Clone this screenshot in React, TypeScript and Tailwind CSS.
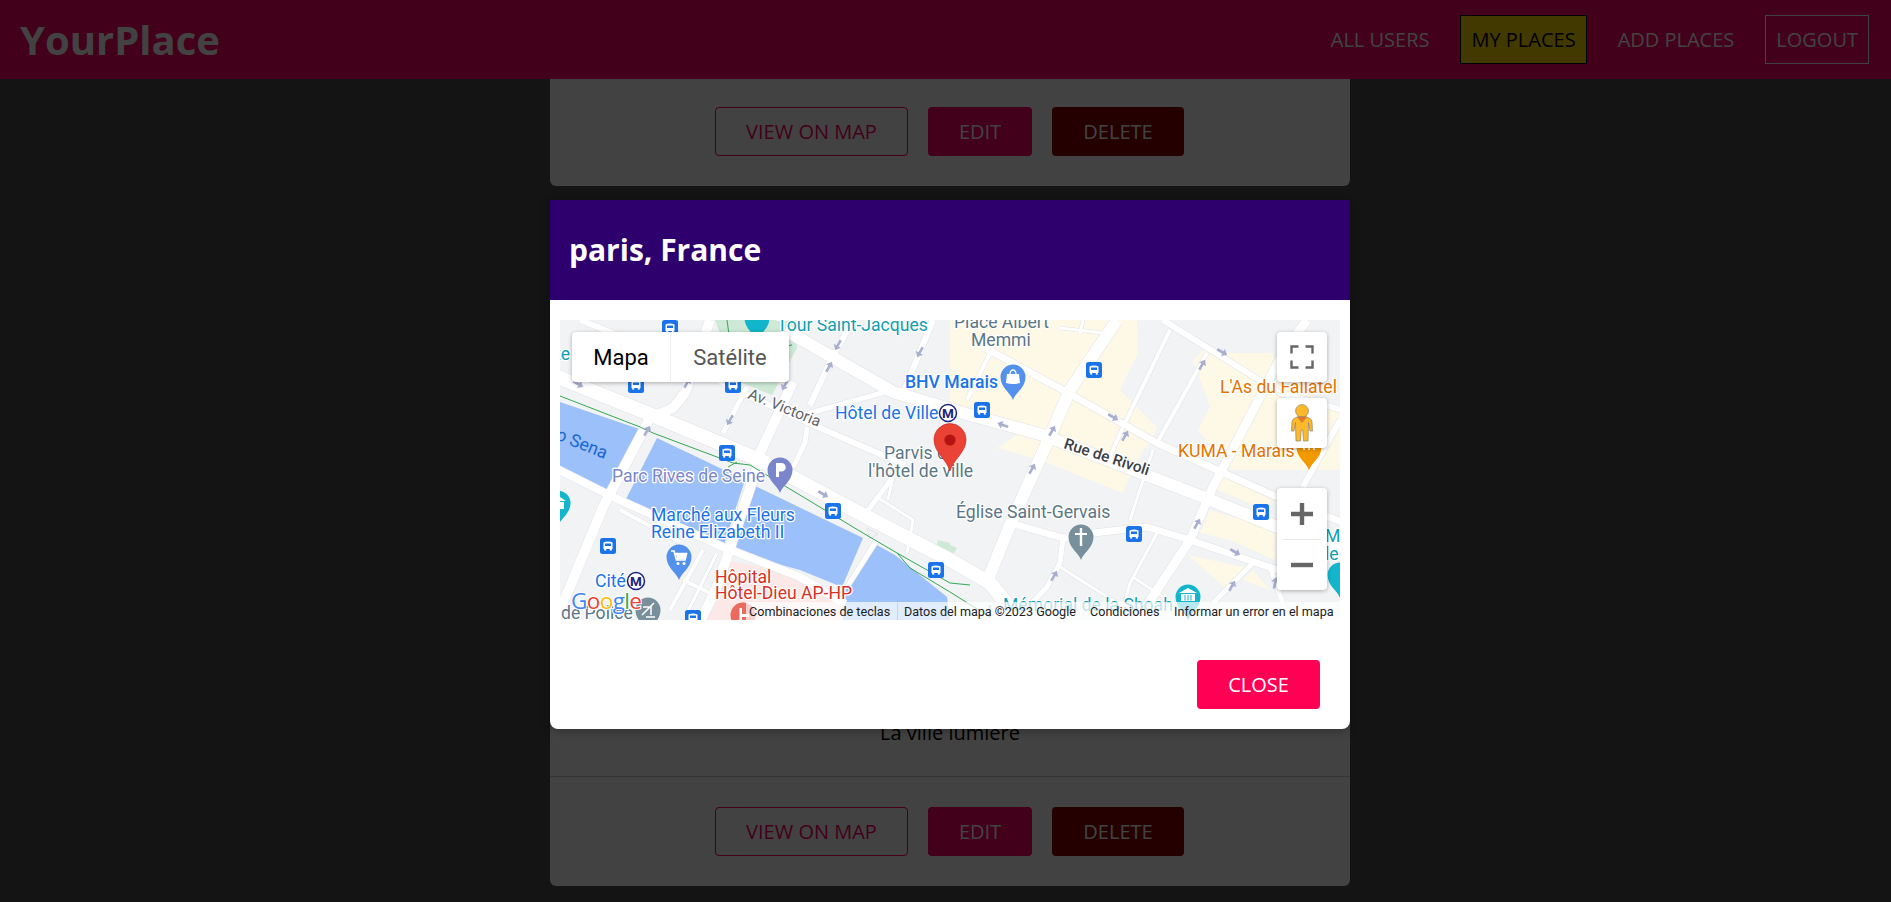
const FONT = "font-['Open_Sans',sans-serif]";

const roads: [number, string][] = [
  [14, "M-10,54 L87,93 L200,140 L307,197 L390,240 L430,263 L462,302"],
  [12, "M225,10 L333,72 L403,93 L483,115 L643,177 L717,207 L790,230"],
  [6, "M20,0 L120,40 L187,75 L260,108 L345,145"],
  [5, "M243,95 L325,72 L345,74"],
  [8, "M-5,148 L55,178 L163,227 L240,257 L285,284"],
  [10, "M150,0 L125,73 L113,88 L90,98 L43,187 L10,267 L-5,300"],
  [10, "M233,62 L220,90 L200,133 L197,147 L157,267 L140,302"],
  [6, "M293,0 L270,42 L250,85"],
  [5, "M187,67 L163,113"],
  [5, "M247,107 L245,123 L233,147"],
  [5, "M333,157 L303,197"],
  [5, "M317,220 L287,267"],
  [6, "M373,0 L343,73"],
  [3, "M333,157 L328,180 M317,177 L353,200 L347,233"],
  [4, "M143,230 L110,290"],
  [3, "M157,233 L127,293"],
  [4, "M123,260 L150,273"],
  [4, "M60,190 L120,222"],
  [12, "M557,0 L510,70 L487,123 L450,205 L427,262"],
  [4, "M610,10 L563,107 L550,137"],
  [3, "M593,130 L570,200"],
  [4, "M647,33 L597,123"],
  [9, "M747,0 L723,33 L653,167 L630,220 L587,285 L575,302"],
  [6, "M780,100 L743,167"],
  [7, "M423,27 L503,70 L597,123 L657,150 L717,177 L790,205"],
  [6, "M603,0 L667,40 L720,73 L790,92"],
  [7, "M450,203 L503,218 L533,213 L587,207 L630,220 L697,243 L727,253 L790,257"],
  [5, "M503,218 L500,243 L487,267 L473,282"],
  [3, "M500,247 L557,283"],
  [3, "M597,213 L570,263 L563,290"],
  [3, "M573,257 L603,277"],
  [5, "M693,243 L653,283"],
  [5, "M710,247 L727,295"],
  [4, "M433,27 L407,80"],
  [3, "M500,8 L543,13 M523,0 L520,14"],
];

const yellow = [
  "390,0 577,0 578,33 560,70 597,107 593,117 577,140 563,173 480,140 437,128 457,115 390,83",
  "633,40 647,27 673,33 713,33 717,60 780,90 780,150 670,150 638,110 650,87",
  "640,213 650,190 717,210 715,240 670,220",
  "657,170 663,157 713,177 707,190",
  "628,235 688,248 665,268",
  "693,250 710,270 683,260",
];

const water = [
  "0,82 82,110 53,177 0,150",
  "97,118 185,160 163,228 63,185",
  "193,165 303,218 282,267 240,250 173,232",
  "313,223 335,235 387,277 390,300 283,300 282,270",
];

const arrows: [number, number, number][] = [
  [18, 64, 30], [127, 63, -60], [225, 65, 120], [278, 25, 120], [269, 47, -60], [360, 32, 120], [170, 100, 120],
  [87, 111, -60], [263, 174, 30], [662, 32, 30], [642, 45, -60], [553, 97, 30], [565, 116, -60], [492, 111, -60],
  [443, 105, -160], [472, 149, -60], [637, 204, -60], [675, 232, 30], [494, 256, -60], [672, 266, -60], [715, 263, -80],
];

const buses: [number, number][] = [
  [110, 8], [76, 65], [173, 65], [534, 50], [422, 90], [701, 192], [574, 214], [167, 133], [273, 191],
  [48, 226], [376, 250], [133, 298],
];

function Bus({ x, y }: { x: number; y: number }) {
  return (
    <g transform={`translate(${x - 8} ${y - 8})`}>
      <rect width="16" height="16" rx="2.5" fill="#1a73e8" />
      <path d="M3.5,4.5 Q8,2.5 12.5,4.5 L12.5,11 L3.5,11 Z M5,5.5 L5,8 L11,8 L11,5.5 Z" fill="#fff" fillRule="evenodd" />
      <rect x="4.2" y="11" width="2" height="1.6" fill="#fff" />
      <rect x="9.8" y="11" width="2" height="1.6" fill="#fff" />
    </g>
  );
}

function Drop({ x, y, fill, children }: { x: number; y: number; fill: string; children?: React.ReactNode }) {
  return (
    <g transform={`translate(${x} ${y})`}>
      <path d="M0,23 C-2,16 -12.5,11 -12.5,0 A12.5,12.5 0 1 1 12.5,0 C12.5,11 2,16 0,23 Z" fill={fill} />
      {children}
    </g>
  );
}

function Label({ x, y, fill, children, size = 17.6, weight = 400, rotate, halo = 2.5 }: { x: number; y: number; fill: string; children: React.ReactNode; size?: number; weight?: number; rotate?: number; halo?: number }) {
  return (
    <text
      x={x}
      y={y}
      fill={fill}
      fontSize={size}
      fontWeight={weight}
      stroke="#fff"
      strokeWidth={halo}
      strokeLinejoin="round"
      paintOrder="stroke"
      transform={rotate ? `rotate(${rotate} ${x} ${y})` : undefined}
    >
      {children}
    </text>
  );
}

function Metro({ x, y }: { x: number; y: number }) {
  return (
    <g transform={`translate(${x} ${y})`}>
      <circle r="8.5" fill="#fff" stroke="#1a237e" strokeWidth="1.5" />
      <text textAnchor="middle" y="5" fontSize="13.5" fontWeight={700} fill="#1a237e">M</text>
    </g>
  );
}

function MapDrawing() {
  return (
    <svg viewBox="0 0 780 300" width="780" height="300" className="block font-['Roboto',sans-serif]">
      <rect width="780" height="300" fill="#f1f3f4" />
      <polygon points="155,0 232,0 237,28 212,75 180,62 170,40" fill="#ceead6" />
      {yellow.map((p) => (
        <polygon key={p} points={p} fill="#fef8e6" />
      ))}
      <polygon points="165,240 240,255 283,285 283,300 140,300" fill="#fce8e6" />
      <polygon points="378,220 390,223 390,231 376,228" fill="#ceead6" />
      <polygon points="390,225 397,228 394,233 390,232" fill="#ceead6" />
      {water.map((p) => (
        <polygon key={p} points={p} fill="#9cc0f9" />
      ))}
      {roads.map(([w, d]) => (
        <path key={d} d={d} fill="none" stroke="#e0e2e6" strokeWidth={w + 1} strokeLinejoin="round" />
      ))}
      {roads.map(([w, d]) => (
        <path key={d + "w"} d={d} fill="none" stroke="#fff" strokeWidth={w} strokeLinejoin="round" />
      ))}
      <polygon points="307,208 318,214 310,219" fill="#f1f3f4" stroke="#dadce0" strokeWidth=".7" />
      <g fill="none" stroke="#34a853" strokeWidth="1">
        <path d="M0,76 L80,107 L93,113 L173,143 L190,145 L303,213 L337,233 L390,263 L410,265" />
        <path d="M337,233 L350,248 L390,272 L430,297" />
        <path d="M168,147 L177,142" />
        <path d="M170,22 L167,0 M170,22 L205,30 L218,62 M205,30 L232,25 M430,285 L430,298" />
      </g>
      {arrows.map(([x, y, r]) => (
        <path key={`${x}-${y}`} d="M-5.5,-1.3 L1,-1.3 L1,-4 L6,0 L1,4 L1,1.3 L-5.5,1.3 Z" fill="#a9afd0" transform={`translate(${x} ${y}) rotate(${r})`} />
      ))}
      {buses.map(([x, y]) => (
        <Bus key={`${x}-${y}`} x={x} y={y} />
      ))}

      <Drop x={197} y={-2} fill="#12b5cb" />
      <Drop x={-2} y={183} fill="#12b5cb">
        <path d="M2,-6 L8,-2 H-4 Z M-2,-1 H6 V6 H-2 Z" fill="#fff" />
      </Drop>
      <Drop x={780} y={255} fill="#12b5cb" />
      <Drop x={453} y={57} fill="#5491ec">
        <path d="M-6,-3 H6 L7,6 Q0,8 -7,6 Z" fill="#fff" />
        <path d="M-3,-3 A3,4 0 0 1 3,-3" fill="none" stroke="#fff" strokeWidth="1.3" />
      </Drop>
      <Drop x={220} y={150} fill="#7986cb">
        <path d="M-4,-7 H1.5 A4,4 0 0 1 1.5,1.5 H-1 V7 H-4 Z" fill="#fff" />
      </Drop>
      <Drop x={119} y={237} fill="#5491ec">
        <path d="M-8,-6 H-5 L-2.5,3 H6 L7.5,-3.5 H-4" fill="none" stroke="#fff" strokeWidth="1.7" />
        <path d="M-3,-3 H7 L6,2.5 H-2 Z" fill="#fff" />
        <circle cx="-1" cy="6.5" r="1.5" fill="#fff" />
        <circle cx="5" cy="6.5" r="1.5" fill="#fff" />
      </Drop>
      <Drop x={521} y={217} fill="#78909c">
        <path d="M-1.2,-9 H1.2 V-4 H6 V-2 H1.2 V9 H-1.2 V-2 H-6 V-4 H-1.2 Z" fill="#fff" />
      </Drop>
      <Drop x={749} y={127} fill="#f29900">
        <path d="M-5,-4 V3 M0,-4 V3 M5,-4 V3" stroke="#fff" strokeWidth="1.6" />
      </Drop>
      <Drop x={628} y={277} fill="#12b5cb">
        <path d="M0,-9 L9,-4 H-9 Z M-7,-3 H7 V4 H-7 Z" fill="#fff" />
        <path d="M-3,-2 V3.5 M0,-2 V3.5 M3,-2 V3.5" stroke="#12b5cb" strokeWidth="1" />
      </Drop>
      <Drop x={183} y={295} fill="#ea6a60">
        <path d="M-3.5,-7 H-1 V-1 H6 V2 H-1 V7 H-3.5 Z" fill="#fff" />
      </Drop>
      <Drop x={88} y={290} fill="#78909c">
        <path d="M-6,5 L6,-7 M-5,-3 H3 V5 M-2,7 H7" fill="none" stroke="#fff" strokeWidth="1.5" />
      </Drop>

      <Label x={217} y={11} fill="#129eaf">Tour Saint-Jacques</Label>
      <Label x={-5} y={40} fill="#129eaf">te</Label>
      <Label x={394} y={8} fill="#5b7686">Place Albert</Label>
      <Label x={411} y={26} fill="#5b7686">Memmi</Label>
      <Label x={345} y={68} fill="#1a73e8" weight={500}>BHV Marais</Label>
      <Label x={275} y={99} fill="#1a73e8">Hôtel de Ville</Label>
      <Metro x={388} y={93} />
      <Label x={187} y={78} fill="#5f6368" size={15.4} rotate={22}>Av. Victoria</Label>
      <Label x={503} y={128} fill="#3c4043" size={15.4} weight={500} rotate={18}>Rue de Rivoli</Label>
      <Label x={-5} y={119} fill="#1967d2" halo={0} rotate={22}>o Sena</Label>
      <Label x={52} y={162} fill="#7986cb">Parc Rives de Seine</Label>
      <Label x={324} y={139} fill="#5b7686">Parvis de</Label>
      <Label x={308} y={157} fill="#5b7686">l'hôtel de ville</Label>
      <Label x={660} y={73} fill="#e37400">L'As du Fallatel</Label>
      <Label x={618} y={137} fill="#e37400">KUMA - Marais</Label>
      <Label x={396} y={198} fill="#5b7686">Église Saint-Gervais</Label>
      <Label x={91} y={201} fill="#1a73e8">Marché aux Fleurs</Label>
      <Label x={91} y={218} fill="#1a73e8">Reine Elizabeth II</Label>
      <Label x={155} y={263} fill="#d93025">Hôpital</Label>
      <Label x={155} y={279} fill="#d93025">Hôtel-Dieu AP-HP</Label>
      <Label x={35} y={267} fill="#1a73e8">Cité</Label>
      <Metro x={76} y={261} />
      <Label x={1} y={299} fill="#5b7686">de Police</Label>
      <Label x={443} y={291} fill="#129eaf">Mémorial de la Shoah</Label>
      <Label x={765} y={222} fill="#129eaf">Ma</Label>
      <Label x={765} y={240} fill="#129eaf">le</Label>

      <g transform="translate(390 123)">
        <path d="M0,28 C-3,17 -16,9 -16,-3 A16,16.5 0 1 1 16,-3 C16,9 3,17 0,28 Z" fill="#ea4335" stroke="#c5221f" strokeWidth=".6" />
        <circle cy="-3" r="5.6" fill="#b31412" />
      </g>

      <text x={11} y={289} fontSize="22.5" fontWeight={500} stroke="#fff" strokeWidth="2" paintOrder="stroke" fontFamily="'Open Sans',sans-serif" letterSpacing="-.6">
        <tspan fill="#4285f4">G</tspan>
        <tspan fill="#ea4335">o</tspan>
        <tspan fill="#fbbc05">o</tspan>
        <tspan fill="#4285f4">g</tspan>
        <tspan fill="#34a853">l</tspan>
        <tspan fill="#ea4335">e</tspan>
      </text>

      <rect x="186" y="282" width="594" height="18" fill="#fff" fillOpacity=".7" />
      <rect x="337" y="282" width="1" height="18" fill="#d0d4dc" />
      <g fontSize="12.6" fill="#202124">
        <text x="189" y="296">Combinaciones de teclas</text>
        <text x="344" y="296">Datos del mapa ©2023 Google</text>
        <text x="530" y="296">Condiciones</text>
        <text x="614" y="296">Informar un error en el mapa</text>
      </g>
    </svg>
  );
}

function MapView() {
  return (
    <div className="relative w-[780px] h-[300px] overflow-hidden">
      <MapDrawing />
      <div className="absolute left-3 top-3 flex h-[50px] bg-white rounded-sm shadow-[0_1px_4px_rgba(0,0,0,0.3)] font-['Roboto',sans-serif] text-[22px]">
        <div className="w-[99px] flex items-center justify-center text-black border-r border-[#eeeeee]">Mapa</div>
        <div className="w-[118px] flex items-center justify-center text-[#565656]">Satélite</div>
      </div>
      <div className="absolute right-[13px] top-3 w-[50px] flex flex-col">
        <div className="h-[50px] bg-white rounded-sm shadow-[0_1px_4px_rgba(0,0,0,0.3)] flex items-center justify-center">
          <svg width="24" height="24" viewBox="0 0 24 24" fill="none" stroke="#666" strokeWidth="2.4">
            <path d="M1.5,8.5 V1.5 H8.5 M15.5,1.5 H22.5 V8.5 M22.5,15.5 V22.5 H15.5 M8.5,22.5 H1.5 V15.5" />
          </svg>
        </div>
        <div className="mt-4 h-[50px] bg-white rounded-sm shadow-[0_1px_4px_rgba(0,0,0,0.3)] flex items-center justify-center">
          <svg width="22" height="38" viewBox="0 0 22 38">
            <circle cx="11" cy="7" r="6.4" fill="#fdb92c" stroke="#8f8468" strokeWidth="0.7" />
            <path d="M7,12.5 H15 L19,14.5 Q21,15.5 21,18 L21.5,27 L19,27 L17.5,18.5 L17,37 L12.5,37 L11.8,26 L10.2,26 L9.5,37 L5,37 L4.5,18.5 L3,27 L0.5,27 L1,18 Q1,15.5 3,14.5 Z" fill="#fdb92c" stroke="#8f8468" strokeWidth="0.7" />
            <path d="M6,13 H16 L11,19 Z" fill="#e07b2e" />
          </svg>
        </div>
        <div className="mt-10 h-[102px] bg-white rounded-sm shadow-[0_1px_4px_rgba(0,0,0,0.3)] flex flex-col items-center">
          <div className="h-[51px] flex items-center justify-center">
            <svg width="24" height="24" viewBox="0 0 24 24"><path d="M9.8,1 H14.2 V9.8 H23 V14.2 H14.2 V23 H9.8 V14.2 H1 V9.8 H9.8 Z" fill="#666" /></svg>
          </div>
          <div className="w-[38px] h-px bg-[#e6e6e6]" />
          <div className="h-[50px] flex items-center justify-center">
            <svg width="24" height="24" viewBox="0 0 24 24"><rect x="1" y="9.8" width="22" height="4.4" fill="#666" /></svg>
          </div>
        </div>
      </div>
    </div>
  );
}

function NavItem({ children, className = "" }: { children: React.ReactNode; className?: string }) {
  return <a className={`block p-[10px] border text-[20px] leading-[27px] ${className}`}>{children}</a>;
}

function Actions() {
  return (
    <div className="flex justify-center gap-5 pr-px text-[20px] leading-[27px]">
      <a className="h-[49px] w-[193px] flex items-center justify-center border border-[#ff0066] rounded text-[#ff0066]">VIEW ON MAP</a>
      <a className="h-[49px] w-[104px] flex items-center justify-center bg-[#ff0066] rounded text-white">EDIT</a>
      <a className="h-[49px] w-[132px] flex items-center justify-center bg-[#8b0000] rounded text-white">DELETE</a>
    </div>
  );
}

export default function App() {
  return (
    <div className={`relative h-[902px] overflow-hidden bg-[#4d4d4d] ${FONT}`}>
      <header className="h-[79px] bg-[#ff0066] flex items-center justify-between pl-5 pr-[22px]">
        <h1 className="text-[40px] font-bold text-white leading-none">YourPlace</h1>
        <nav className="flex gap-5 text-white">
          <NavItem className="border-transparent">ALL USERS</NavItem>
          <NavItem className="bg-[#ffdd00] border-black text-black">MY PLACES</NavItem>
          <NavItem className="border-transparent">ADD PLACES</NavItem>
          <NavItem className="border-white">LOGOUT</NavItem>
        </nav>
      </header>

      <main className="flex flex-col items-center pl-[9px]">
        <section className="w-[800px] bg-white rounded-b-md pt-7 pb-[30px]">
          <Actions />
        </section>
        <section className="mt-4 w-[800px] h-[684px] bg-white rounded-md flex flex-col justify-end pb-[30px]">
          <p className="text-center text-[20px] leading-[27px] text-black pb-[30px]">La ville lumière</p>
          <div className="border-t border-[#cccccc] pt-[30px]">
            <Actions />
          </div>
        </section>
      </main>

      <div className="absolute inset-0 bg-black/[0.74] flex justify-center items-start pl-[9px] pt-[200px]">
        <div className="w-[800px] h-[529px] bg-white rounded-b-lg shadow-[0_2px_8px_rgba(0,0,0,0.26)]">
          <div className="h-[100px] bg-[#2d006e] flex items-center pl-[19px] pr-5 pb-0.5">
            <h2 className="text-[30px] font-bold text-white">paris, France</h2>
          </div>
          <div className="px-[10px] pt-5">
            <MapView />
          </div>
          <div className="flex justify-end pt-10 pr-[30px]">
            <button className="h-[49px] w-[123px] bg-[#ff0055] rounded text-white text-[20px]">CLOSE</button>
          </div>
        </div>
      </div>
    </div>
  );
}
